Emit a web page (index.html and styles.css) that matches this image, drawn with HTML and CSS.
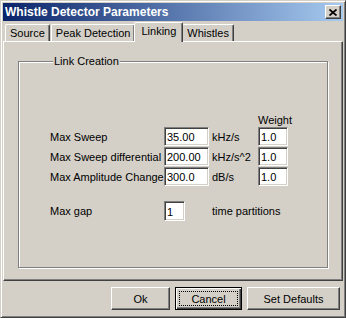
FILE: index.html
```html
<!DOCTYPE html>
<html lang="en">
<head>
    <meta charset="UTF-8">
    <title>Whistle Detector Parameters</title>
    <link rel="stylesheet" href="styles.css">
</head>
<body>
    <div class="window">
        <div class="titlebar">
            <span class="title">Whistle Detector Parameters</span>
            <button class="close" type="button" aria-label="Close">
                <svg width="8" height="7" viewBox="0 0 8 7"><path d="M0.5 0.5 L7.5 6.5 M7.5 0.5 L0.5 6.5" stroke="#000" stroke-width="1.7" fill="none"/></svg>
            </button>
        </div>

        <div class="tabs">
            <div class="tab">Source</div>
            <div class="tab">Peak Detection</div>
            <div class="tab active">Linking</div>
            <div class="tab">Whistles</div>
        </div>

        <div class="panel">
            <fieldset class="group">
                <legend>Link Creation</legend>
                <div class="params">
                    <span></span><span></span><span></span><span class="head">Weight</span>

                    <label>Max Sweep</label>
                    <input class="field" type="text" value="35.00">
                    <span class="unit">kHz/s</span>
                    <input class="field weight" type="text" value="1.0">

                    <label>Max Sweep differential</label>
                    <input class="field" type="text" value="200.00">
                    <span class="unit">kHz/s^2</span>
                    <input class="field weight" type="text" value="1.0">

                    <label>Max Amplitude Change</label>
                    <input class="field" type="text" value="300.0">
                    <span class="unit">dB/s</span>
                    <input class="field weight" type="text" value="1.0">

                    <label class="gap-row">Max gap</label>
                    <input class="field narrow gap-row" type="text" value="1">
                    <span class="unit gap-row wide">time partitions</span>
                </div>
            </fieldset>
        </div>

        <div class="buttons">
            <button class="btn ok" type="button">Ok</button>
            <button class="btn cancel default" type="button"><span class="focus">Cancel</span></button>
            <button class="btn defaults" type="button">Set Defaults</button>
        </div>
    </div>
</body>
</html>
```

FILE: styles.css
```css
/* classic windows dialog colours */
:root {
    --face: #d4d0c8;
    --light: #ffffff;
    --shadow: #808080;
    --dark: #404040;
}

* {
    box-sizing: border-box;
}

body {
    margin: 0;
    font-family: 'Liberation Sans', Arial, sans-serif;
    font-size: 11px;
    color: #000;
    background: var(--face);
}

.window {
    width: 346px;
    height: 318px;
    display: flex;
    flex-direction: column;
    padding: 2px;
    background: var(--face);
    border: 1px solid;
    border-color: var(--face) var(--dark) var(--dark) var(--face);
    box-shadow: inset 1px 1px var(--light), inset -1px -1px var(--shadow);
}

.titlebar {
    height: 18px;
    display: flex;
    align-items: center;
    justify-content: space-between;
    padding: 0 2px;
    background: linear-gradient(to right, #0a246a, #a6caf0);
}

.title {
    color: #fff;
    font-weight: bold;
    font-size: 12px;
}

.close {
    width: 16px;
    height: 14px;
    padding: 0;
    display: flex;
    align-items: center;
    justify-content: center;
    background: var(--face);
    border: 1px solid;
    border-color: var(--light) var(--dark) var(--dark) var(--light);
    box-shadow: inset -1px -1px var(--shadow);
}

/* tab strip */
.tabs {
    height: 20px;
    display: flex;
    align-items: flex-end;
    padding-left: 2px;
}

.tab {
    height: 17px;
    padding: 1px 4px 0 4px;
    line-height: 15px;
    border: 1px solid;
    border-bottom: none;
    border-color: var(--light) var(--dark) transparent var(--light);
    border-radius: 2px 2px 0 0;
    box-shadow: inset -1px 0 var(--shadow);
    margin-right: 1px;
}

.tab.active {
    height: 20px;
    margin: 0 -1px -1px -2px;
    padding: 1px 6px 0 6px;
    position: relative;
    z-index: 1;
    background: var(--face);
}

.panel {
    flex: 1;
    display: flex;
    padding: 13px 14px 12px 14px;
    border: 1px solid;
    border-color: var(--light) var(--dark) var(--dark) var(--light);
    box-shadow: inset -1px -1px var(--shadow);
}

.group {
    flex: 1;
    margin: 0;
    padding: 0 0 0 31px;
    border: 1px solid var(--shadow);
    box-shadow: 1px 1px var(--light), inset 1px 1px var(--light);
}

.group legend {
    padding: 0 1px;
    margin-left: 3px;
    background: var(--face);
}

.params {
    display: grid;
    grid-template-columns: 114px 45px 49px 30px;
    grid-template-rows: 13px repeat(3, 19px) 13px 20px;
    row-gap: 1px;
    align-items: center;
    margin-top: 46px;
}

.params .head {
    align-self: end;
}

.unit {
    padding-left: 3px;
}

.unit.wide {
    grid-column: span 2;
}

.gap-row {
    grid-row: 6;
}

.field {
    height: 19px;
    width: 100%;
    margin: 0;
    padding: 1px 2px 0;
    font: inherit;
    background: #fff;
    border: 1px solid;
    border-color: var(--shadow) var(--light) var(--light) var(--shadow);
    box-shadow: inset 1px 1px var(--dark), inset -1px -1px var(--face);
    outline: none;
}

.field.narrow {
    width: 21px;
    height: 20px;
}

/* dialog buttons */
.buttons {
    height: 34px;
    display: flex;
    justify-content: flex-end;
    align-items: flex-start;
    gap: 5px;
    padding: 6px 3px 0 0;
}

.btn {
    height: 23px;
    padding: 0;
    font: inherit;
    color: #000;
    background: var(--face);
    border: 1px solid;
    border-color: var(--light) var(--dark) var(--dark) var(--light);
    box-shadow: inset -1px -1px var(--shadow);
}

.ok { width: 59px; }
.cancel { width: 67px; }
.defaults { width: 93px; }

.btn.default {
    border: 1px solid #000;
    box-shadow: inset 1px 1px var(--light), inset -1px -1px var(--dark), inset -2px -2px var(--shadow);
    display: flex;
    padding: 3px;
}

.focus {
    flex: 1;
    display: flex;
    align-items: center;
    justify-content: center;
    border: 1px dotted #000;
}
```
